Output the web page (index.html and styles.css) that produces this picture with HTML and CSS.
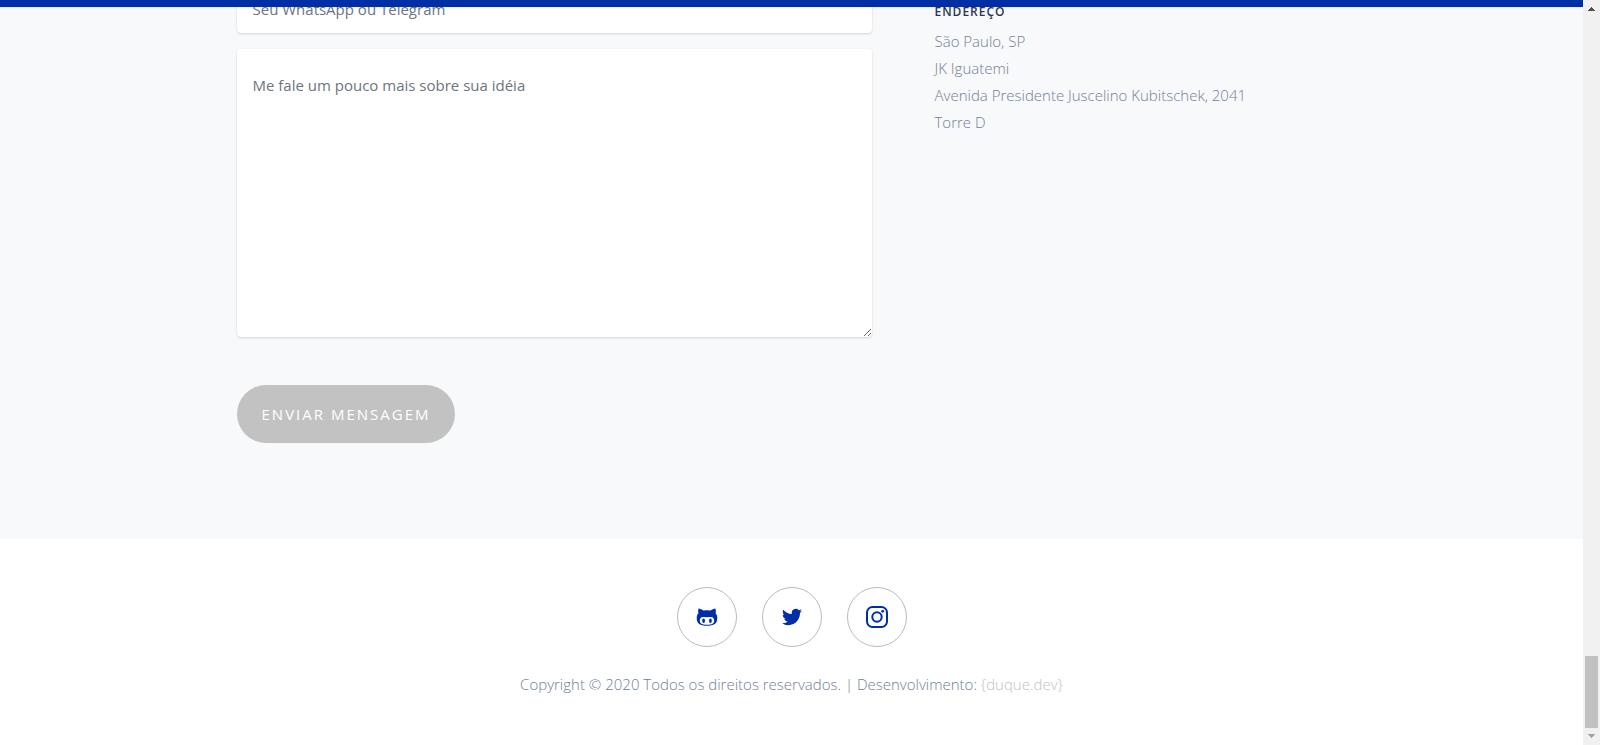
FILE: index.html
```html
<!DOCTYPE html>
<html lang="pt-BR">
<head>
<meta charset="utf-8">
<meta name="viewport" content="width=device-width, initial-scale=1">
<title>Contato</title>
<link rel="stylesheet" href="styles.css">
</head>
<body>
<div class="page">
  <header class="topbar"></header>
  <main class="contact">
    <div class="container">
      <form class="contact-form">
        <input class="field" type="text" placeholder="Seu WhatsApp ou Telegram" aria-label="Seu WhatsApp ou Telegram">
        <textarea class="field message" placeholder="Me fale um pouco mais sobre sua idéia" aria-label="Me fale um pouco mais sobre sua idéia"></textarea>
        <button class="send" type="button">ENVIAR MENSAGEM</button>
      </form>
      <address class="address">
        <h2 class="address-title">ENDEREÇO</h2>
        <p class="address-line">São Paulo, SP</p>
        <p class="address-line">JK Iguatemi</p>
        <p class="address-line">Avenida Presidente Juscelino Kubitschek, 2041</p>
        <p class="address-line">Torre D</p>
      </address>
    </div>
  </main>
  <footer class="footer">
    <nav class="social">
      <a class="social-link" href="#" aria-label="GitHub">
        <svg class="icon" viewBox="0 0 24 24"><path fill-rule="evenodd" d="M3.600 3.600C5.200 3.600 7 4.600 8.300 5.600Q12 5 15.700 5.600C17 4.600 18.800 3.600 20.400 3.600C21 5.200 21 6.900 20.600 8.200C21.800 9.500 22.300 11 22.300 13C22.300 18.500 19 20.800 12 20.800S1.700 18.500 1.700 13C1.700 11 2.200 9.500 3.400 8.200C3 6.900 3 5.200 3.600 3.600ZM8 12C6 12 4.800 13.500 4.800 15.600C4.800 18.800 7 19.800 12 19.800S19.200 18.800 19.200 15.600C19.200 13.500 18 12 16 12C14.800 12 13.600 12.200 12 12.200S9.200 12 8 12Z"/><ellipse cx="8.600" cy="15.800" rx="1.400" ry="2.200"/><ellipse cx="15.400" cy="15.800" rx="1.400" ry="2.200"/></svg>
      </a>
      <a class="social-link" href="#" aria-label="Twitter">
        <svg class="icon icon-small" viewBox="0 0 24 24"><path d="M23.950 4.570a10 10 0 0 1-2.820.770 4.960 4.960 0 0 0 2.160-2.720c-.95.550-2 .950-3.130 1.180a4.920 4.920 0 0 0-8.380 4.480C7.690 8.100 4.070 6.130 1.640 3.160a4.820 4.820 0 0 0-.67 2.480c0 1.710.870 3.210 2.190 4.100a4.900 4.900 0 0 1-2.230-.620v.060a4.920 4.920 0 0 0 3.950 4.830 5 5 0 0 1-2.210.080 4.940 4.940 0 0 0 4.600 3.420A9.870 9.870 0 0 1 0 19.540a14 14 0 0 0 7.550 2.210c9.050 0 14-7.500 14-13.980 0-.210 0-.420-.02-.63a9.900 9.900 0 0 0 2.420-2.570z"/></svg>
      </a>
      <a class="social-link" href="#" aria-label="Instagram">
        <svg class="icon" viewBox="0 0 24 24"><rect class="stroke" x="2" y="2" width="20" height="20" rx="5.500"/><circle class="stroke" cx="12" cy="12" r="4.700"/><circle cx="17.700" cy="6.300" r="1.400"/></svg>
      </a>
    </nav>
    <p class="copyright">Copyright © 2020 Todos os direitos reservados. | Desenvolvimento: <a class="credit" href="#">{duque.dev}</a></p>
  </footer>
</div>
<div class="scrollbar" aria-hidden="true">
  <svg class="arrow arrow-up" viewBox="0 0 17 17"><path d="M5 11h7v-1h-1V9h-1V8H9V7H8v1H7v1H6v1H5z"/></svg>
  <div class="thumb"></div>
  <svg class="arrow" viewBox="0 0 17 17"><path d="M5 6h7v1h-1v1h-1v1H9v1H8V9H7V8H6V7H5z"/></svg>
</div>
</body>
</html>
```
FILE: styles.css
```css
* {
  box-sizing: border-box;
}

body {
  margin: 0;
  display: flex;
  height: 100vh;
  overflow: hidden;
  background: #fff;
  color: #718096;
  font: 300 15px/27px "Open Sans", "Noto Sans", sans-serif;
}

.page {
  flex: 1;
  min-width: 0;
  overflow: hidden;
}

.topbar {
  position: relative;
  z-index: 1;
  height: 7px;
  background: #002ea6;
  box-shadow: 0 1px 2px rgba(0, 0, 0, 0.08);
}

.contact {
  margin-top: -22px;
  padding-bottom: 96px;
  background: #f8f9fb;
}

.container {
  display: grid;
  grid-template-columns: 7fr 5fr;
  max-width: 1140px;
  margin: 0 auto;
}

.contact-form {
  display: flex;
  flex-direction: column;
  align-items: flex-start;
  gap: 16px;
  padding: 0 15px;
}

.field {
  display: block;
  width: 100%;
  height: 48px;
  padding: 0 16px;
  border: 0;
  border-radius: 4px;
  background: #fff;
  box-shadow: 0 1px 3px rgba(0, 0, 0, 0.1), 0 1px 2px rgba(0, 0, 0, 0.06);
  color: #2d3748;
  font: 400 15px/24px "Open Sans", "Noto Sans", sans-serif;
}

.field::placeholder {
  color: #6c757d;
}

.message {
  height: 288px;
  padding: 24px 16px;
  resize: both;
}

.send {
  margin-top: 32px;
  padding: 17px 25px;
  border: 0;
  border-radius: 29px;
  background: #c2c2c2;
  color: #fff;
  font: 400 15px/24px "Open Sans", "Noto Sans", sans-serif;
  letter-spacing: 2px;
}

.address {
  padding: 18px 15px 0 48px;
  font-style: normal;
}

.address-title {
  margin: 0 0 7px;
  color: #2d3748;
  font-size: 12px;
  font-weight: 600;
  line-height: 18px;
  letter-spacing: 1px;
}

.address-line {
  margin: 0;
}

.footer {
  padding: 48px 15px;
  text-align: center;
}

.social {
  display: flex;
  justify-content: center;
  gap: 25px;
}

.social-link {
  display: grid;
  place-items: center;
  width: 60px;
  height: 60px;
  border: 1px solid #b4bcc6;
  border-radius: 50%;
}

.icon {
  width: 24px;
  height: 24px;
  fill: #002ea6;
}

.icon-small {
  width: 20px;
  height: 20px;
}

.stroke {
  fill: none;
  stroke: #002ea6;
  stroke-width: 2;
}

.copyright {
  margin: 24px 0 0;
}

.credit {
  color: #c2c2c2;
  text-decoration: none;
}

.scrollbar {
  display: flex;
  flex-direction: column;
  width: 17px;
  background: #f1f1f1;
}

.arrow {
  width: 17px;
  height: 17px;
  fill: #a3a3a3;
}

.arrow-up {
  margin-bottom: auto;
  fill: #505050;
}

.thumb {
  height: 72px;
  margin: 0 2px;
  background: #c1c1c1;
}
```
